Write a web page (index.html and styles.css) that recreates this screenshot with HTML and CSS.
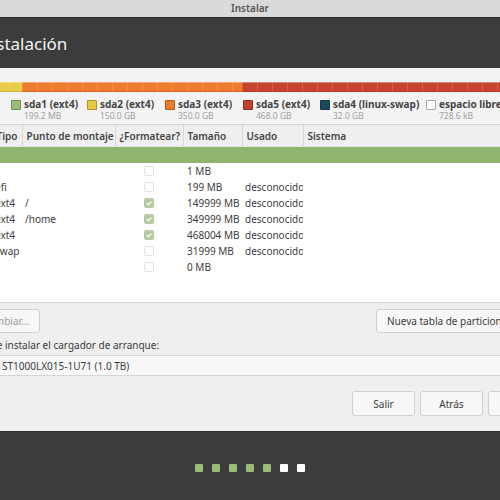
FILE: index.html
```html
<!DOCTYPE html>
<html lang="es">
<head>
    <meta charset="UTF-8">
    <title>Instalar</title>
    <link rel="stylesheet" href="styles.css">
</head>
<body>
    <div class="window">
        <div class="titlebar">Instalar</div>
        <div class="header">
            <h1 class="page-title">Instalación</h1>
        </div>

        <div class="disk">
            <div class="disk-bar">
                <div class="seg seg-sda1"></div>
                <div class="seg seg-sda2"></div>
                <div class="seg seg-sda3"></div>
                <div class="seg seg-sda5"></div>
            </div>
            <div class="legend">
                <div class="legend-item">
                    <span class="swatch sw-sda1"></span>
                    <div><div class="legend-name">sda1 (ext4)</div><div class="legend-size">199.2 MB</div></div>
                </div>
                <div class="legend-item">
                    <span class="swatch sw-sda2"></span>
                    <div><div class="legend-name">sda2 (ext4)</div><div class="legend-size">150.0 GB</div></div>
                </div>
                <div class="legend-item">
                    <span class="swatch sw-sda3"></span>
                    <div><div class="legend-name">sda3 (ext4)</div><div class="legend-size">350.0 GB</div></div>
                </div>
                <div class="legend-item">
                    <span class="swatch sw-sda5"></span>
                    <div><div class="legend-name">sda5 (ext4)</div><div class="legend-size">468.0 GB</div></div>
                </div>
                <div class="legend-item">
                    <span class="swatch sw-sda4"></span>
                    <div><div class="legend-name">sda4 (linux-swap)</div><div class="legend-size">32.0 GB</div></div>
                </div>
                <div class="legend-item">
                    <span class="swatch sw-free"></span>
                    <div><div class="legend-name">espacio libre</div><div class="legend-size">728.6 kB</div></div>
                </div>
            </div>
        </div>

        <div class="table-wrap">
            <table class="parts">
                <colgroup>
                    <col class="c-dev"><col class="c-type"><col class="c-mount"><col class="c-fmt"><col class="c-size"><col class="c-used"><col>
                </colgroup>
                <thead>
                    <tr>
                        <th>Dispositivo</th>
                        <th>Tipo</th>
                        <th>Punto de montaje</th>
                        <th>¿Formatear?</th>
                        <th>Tamaño</th>
                        <th>Usado</th>
                        <th>Sistema</th>
                    </tr>
                </thead>
                <tbody>
                    <tr class="selected">
                        <td>/dev/sda</td><td></td><td></td><td></td><td></td><td></td><td></td>
                    </tr>
                    <tr>
                        <td>espacio libre</td><td></td><td></td>
                        <td class="fmt"><span class="check"></span></td>
                        <td>1 MB</td><td></td><td></td>
                    </tr>
                    <tr>
                        <td>/dev/sda1</td><td>efi</td><td></td>
                        <td class="fmt"><span class="check"></span></td>
                        <td>199 MB</td><td>desconocido</td><td></td>
                    </tr>
                    <tr>
                        <td>/dev/sda2</td><td>ext4</td><td>/</td>
                        <td class="fmt"><span class="check on"><svg viewBox="0 0 10 10"><path d="M2.3 5.2l1.9 1.9 3.6-3.8"/></svg></span></td>
                        <td>149999 MB</td><td>desconocido</td><td></td>
                    </tr>
                    <tr>
                        <td>/dev/sda3</td><td>ext4</td><td>/home</td>
                        <td class="fmt"><span class="check on"><svg viewBox="0 0 10 10"><path d="M2.3 5.2l1.9 1.9 3.6-3.8"/></svg></span></td>
                        <td>349999 MB</td><td>desconocido</td><td></td>
                    </tr>
                    <tr>
                        <td>/dev/sda5</td><td>ext4</td><td></td>
                        <td class="fmt"><span class="check on"><svg viewBox="0 0 10 10"><path d="M2.3 5.2l1.9 1.9 3.6-3.8"/></svg></span></td>
                        <td>468004 MB</td><td>desconocido</td><td></td>
                    </tr>
                    <tr>
                        <td>/dev/sda4</td><td>swap</td><td></td>
                        <td class="fmt"><span class="check"></span></td>
                        <td>31999 MB</td><td>desconocido</td><td></td>
                    </tr>
                    <tr>
                        <td>espacio libre</td><td></td><td></td>
                        <td class="fmt"><span class="check"></span></td>
                        <td>0 MB</td><td></td><td></td>
                    </tr>
                </tbody>
            </table>
        </div>

        <div class="panel">
            <div class="edit-row">
                <button class="btn btn-change" disabled>Cambiar...</button>
                <button class="btn btn-newtable">Nueva tabla de particiones...</button>
            </div>
            <div class="boot-label">Dispositivo donde instalar el cargador de arranque:</div>
            <div class="combo"><span class="combo-dev">/dev/sda ATA</span>ST1000LX015-1U71 (1.0 TB)</div>
            <div class="nav-row">
                <button class="btn btn-nav">Salir</button>
                <button class="btn btn-nav">Atrás</button>
                <button class="btn btn-nav btn-install">Instalar ahora</button>
            </div>
        </div>

        <div class="footer">
            <span class="dot done"></span>
            <span class="dot done"></span>
            <span class="dot done"></span>
            <span class="dot done"></span>
            <span class="dot done"></span>
            <span class="dot"></span>
            <span class="dot"></span>
        </div>
    </div>
</body>
</html>
```

FILE: styles.css
```css
html, body {
    margin: 0;
    padding: 0;
    overflow: hidden;
    background-color: #3c3c3c;
}

body {
    width: 500px;
    height: 500px;
    font-family: "Noto Sans", sans-serif;
    color: #3c3c3c;
}

.window {
    width: 700px;
    margin-left: -100px;
    background-color: #efefef;
}

.titlebar {
    height: 17px;
    line-height: 17px;
    text-align: center;
    font-size: 10px;
    font-weight: 600;
    color: #555;
    background-color: #dadada;
    border-bottom: 1px solid #2e2e2e;
}

.header {
    height: 50px;
    background-color: #3c3c3c;
    display: flex;
    align-items: center;
    padding-left: 80px;
}

.page-title {
    margin: 1px 0 0 0;
    font-size: 17px;
    font-weight: 400;
    color: #f2f2f2;
}

/* Disk bar + legend */
.disk {
    height: 56px;
    padding-top: 14px;
    box-sizing: border-box;
    background-color: #f3f3f3;
}

.disk-bar {
    display: flex;
    height: 10px;
}

.seg {
    height: 100%;
    box-shadow: inset 0 1px 0 rgba(255, 255, 255, 0.35), inset 0 -1px 0 rgba(0, 0, 0, 0.12);
    background-image: repeating-linear-gradient(90deg, rgba(255, 255, 255, 0.14) 0 1px, transparent 1px 15px);
}

.seg-sda1 { width: 4px; background-color: #9bba7e; }
.seg-sda2 { width: 118px; background-color: #e9cd48; }
.seg-sda3 { width: 220px; background-color: #ef7b2e; }
.seg-sda5 { flex: 1; background-color: #c8432f; }

.legend {
    display: grid;
    grid-template-columns: 76px 78px 78px 77px 106px auto;
    padding-left: 111px;
    margin-top: 8px;
}

.legend-item {
    display: flex;
    gap: 3px;
}

.swatch {
    width: 10px;
    height: 10px;
    box-sizing: border-box;
    border: 1px solid rgba(0, 0, 0, 0.25);
    border-radius: 1px;
    flex-shrink: 0;
}

.sw-sda1 { background-color: #9bba7e; }
.sw-sda2 { background-color: #e6c93e; }
.sw-sda3 { background-color: #ee7a2b; }
.sw-sda5 { background-color: #c4402e; }
.sw-sda4 { background-color: #1c4a5c; }
.sw-free { background-color: #fff; border-color: #a8a8a8; }

.legend-name {
    font-size: 10px;
    font-weight: 700;
    line-height: 11px;
    margin-top: -1px;
    color: #454545;
    white-space: nowrap;
}

.legend-size {
    margin-top: 1px;
    font-size: 8.5px;
    line-height: 10px;
    color: #a0a0a0;
}

/* Partition table */
.table-wrap {
    height: 177px;
    background-color: #fff;
    border-top: 1px solid #d4d4d4;
    border-bottom: 1px solid #d4d4d4;
}

.parts {
    width: 100%;
    border-collapse: collapse;
    table-layout: fixed;
    font-size: 10px;
}

.c-dev { width: 92px; }
.c-type { width: 30px; }
.c-mount { width: 93px; }
.c-fmt { width: 68px; }
.c-size { width: 59px; }
.c-used { width: 61px; }

.parts th {
    height: 21px;
    padding: 0 4px;
    text-align: left;
    font-weight: 600;
    color: #454545;
    background-color: #efefef;
    border-right: 1px solid #d6d6d6;
    border-bottom: 1px solid #e2e2e2;
    white-space: nowrap;
    overflow: hidden;
}

.parts td {
    height: 16px;
    padding: 0 3px;
    white-space: nowrap;
    overflow: hidden;
    color: #3c3c3c;
}

.parts td:nth-child(5) { padding-left: 4px; }

.parts tr.selected td {
    background-color: #8fb46e;
}

.parts td.fmt {
    text-align: center;
    line-height: 0;
}

.check {
    display: inline-block;
    width: 10px;
    height: 10px;
    box-sizing: border-box;
    border: 1px solid #e2e2e2;
    border-radius: 2px;
    background-color: #fff;
    vertical-align: middle;
    margin-left: -1px;
}

.check.on {
    border-color: #b7cba4;
    background-color: #b7cba4;
}

.check svg {
    display: block;
    width: 8px;
    height: 8px;
    fill: none;
    stroke: #fff;
    stroke-width: 1.6;
}

/* Bottom panel */
.panel {
    height: 128px;
    padding-top: 6px;
    box-sizing: border-box;
    background-color: #efefef;
}

.btn {
    font-family: inherit;
    font-size: 10px;
    color: #3c3c3c;
    background-color: #f7f7f7;
    border: 1px solid #d2d2d2;
    border-radius: 3px;
    padding: 0;
}

.edit-row {
    display: flex;
    justify-content: space-between;
    padding: 0 64px 0 72px;
}

.edit-row .btn {
    height: 24px;
}

.btn-change {
    width: 68px;
    color: #9a9a9a;
}

.btn-newtable {
    width: 160px;
    text-align: left;
    padding-left: 10px;
}

.boot-label {
    margin-top: 6px;
    padding-left: 18px;
    font-size: 10px;
    line-height: 12px;
}

.combo {
    margin-top: 4px;
    height: 21px;
    line-height: 20px;
    box-sizing: border-box;
    padding-left: 38px;
    font-size: 10px;
    background-color: #f8f8f8;
    border-top: 1px solid #d6d6d6;
    border-bottom: 1px solid #d6d6d6;
}

.combo-dev {
    display: inline-block;
    width: 64px;
}

.nav-row {
    display: flex;
    justify-content: flex-end;
    gap: 5px;
    margin-top: 15px;
    padding-right: 22px;
}

.btn-nav {
    width: 63px;
    height: 25px;
}

.btn-install {
    width: 90px;
}

/* Slideshow progress */
.footer {
    height: 71px;
    box-sizing: border-box;
    padding-top: 32px;
    background-color: #3c3c3c;
    border-top: 1px solid #2f2f2f;
    display: flex;
    justify-content: center;
    gap: 9px;
}

.dot {
    width: 8px;
    height: 8px;
    background-color: #fff;
    border-radius: 1px;
}

.dot.done {
    background-color: #96be76;
}
```
